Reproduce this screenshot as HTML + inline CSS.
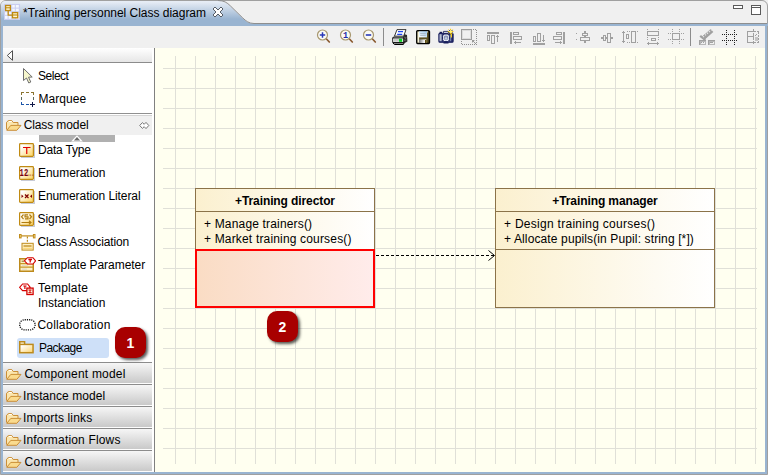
<!DOCTYPE html>
<html>
<head>
<meta charset="utf-8">
<title>Training personnel Class diagram</title>
<style>
html,body{margin:0;padding:0;}
body{width:768px;height:475px;overflow:hidden;background:#f0f0f0;position:relative;font-family:"Liberation Sans",sans-serif;font-size:12px;color:#000;}
.abs{position:absolute;}
#frame{position:absolute;left:0;top:0;width:766px;height:473px;border:1px solid #a0a0a0;border-radius:6px 6px 0 0;background:#f0f0f0;overflow:hidden;}
#tab{position:absolute;left:0;top:0;}
#tabtxt{position:absolute;left:23px;top:6px;white-space:nowrap;font-size:12px;line-height:15px;letter-spacing:-0.02px;}
#blueL{position:absolute;left:1px;top:24px;width:2px;height:449px;background:#99b4d1;}
#blueR{position:absolute;left:765px;top:24px;width:2px;height:449px;background:#99b4d1;}
#blueB{position:absolute;left:1px;top:472px;width:766px;height:2px;background:#99b4d1;}
#blueT{position:absolute;left:1px;top:24px;width:766px;height:2px;background:#99b4d1;}
#tabline{position:absolute;left:250px;top:23px;width:517px;height:1px;background:#a0a0a0;}
#toolbar{position:absolute;left:3px;top:26px;width:762px;height:22px;background:#f0f0f0;}
#side{position:absolute;left:3px;top:48px;width:151px;height:424px;background:#fff;overflow:hidden;}
#sideborder{position:absolute;left:154px;top:48px;width:1px;height:424px;background:#808080;}
#canvas{position:absolute;left:155px;top:48px;width:610px;height:424px;background:#fffff0;}
.lbl{position:absolute;white-space:nowrap;line-height:15px;font-size:12px;}
.hdr{position:absolute;left:0;width:149px;height:19px;background:linear-gradient(#f6f6f6,#c9c9c9);}
.hline{position:absolute;left:0;width:149px;height:1px;background:#8c8c8c;}
.cls{position:absolute;box-sizing:border-box;border:1px solid #8b7349;}
.badge{position:absolute;width:31px;height:31px;border-radius:10px;background:#a80000;box-shadow:2px 2px 3px rgba(0,0,0,.65);color:#fff;font-weight:bold;font-size:14px;line-height:33px;text-align:center;}
</style>
</head>
<body>
<div id="frame"></div>
<!-- TAB -->
<svg id="tab" class="abs" width="768" height="27" viewBox="0 0 768 27">
<defs><linearGradient id="tg" x1="0" y1="0" x2="0" y2="1"><stop offset="0.04" stop-color="#e6ecf5"/><stop offset="0.72" stop-color="#99b4d1"/><stop offset="1" stop-color="#99b4d1"/></linearGradient></defs>
<path d="M1 26 L1 6 Q1 1 6 1 L218 1 C224 1 227 3 230.3 6.2 L242.8 18.4 C246 21.4 249 23.5 254 23.5 L768 23.5 L768 26 Z" fill="url(#tg)"/>
<path d="M218 0.5 C224 0.5 227 2.6 230.3 5.8 L242.8 18 C246 21 249 23.5 254 23.5 L767 23.5" fill="none" stroke="#8e8e8e" stroke-width="1"/>
</svg>
<div id="blueL"></div><div id="blueR"></div><div id="blueB"></div>
<div id="tabtxt">*Training personnel Class diagram</div>
<div id="toolbar"></div>
<svg class="abs" style="left:4px;top:4px" width="16" height="16" viewBox="0 0 16 16"><rect x="0" y="0" width="16" height="16" fill="#c9cdf0"/><g fill="#f4f8ff"><rect x="1" y="1" width="2.6" height="2.6"/><rect x="4.6" y="1" width="2.6" height="2.6"/><rect x="8.2" y="1" width="2.6" height="2.6"/><rect x="11.8" y="1" width="3" height="2.6"/><rect x="1" y="4.6" width="2.6" height="2.6"/><rect x="4.6" y="4.6" width="2.6" height="2.6"/><rect x="8.2" y="4.6" width="2.6" height="2.6"/><rect x="11.8" y="4.6" width="3" height="2.6"/><rect x="1" y="8.2" width="2.6" height="2.6"/><rect x="4.6" y="8.2" width="2.6" height="2.6"/><rect x="8.2" y="8.2" width="2.6" height="2.6"/><rect x="11.8" y="8.2" width="3" height="2.6"/><rect x="1" y="11.8" width="2.6" height="3"/><rect x="4.6" y="11.8" width="2.6" height="3"/><rect x="8.2" y="11.8" width="2.6" height="3"/><rect x="11.8" y="11.8" width="3" height="3"/></g><path d="M4.2 6.5 L4.2 11.2 L8 11.2" fill="none" stroke="#bf8a12" stroke-width="1.3"/><rect x="1.6" y="1.5" width="4.8" height="5" fill="#fff6d0" stroke="#bf8a12" stroke-width="1.3"/><path d="M1.6 3.8 L6.4 3.8" stroke="#bf8a12" stroke-width="1.1"/><rect x="8.5" y="8.6" width="5.2" height="5.2" fill="#fff6d0" stroke="#bf8a12" stroke-width="1.3"/><path d="M8.5 11 L13.7 11" stroke="#bf8a12" stroke-width="1.1"/></svg>
<svg class="abs" style="left:212px;top:6px" width="12" height="12" viewBox="0 0 12 12"><path d="M1 3 L3 1 L6 4 L9 1 L11 3 L8 6 L11 9 L9 11 L6 8 L3 11 L1 9 L4 6 Z" fill="#fff" stroke="#565c66" stroke-width="1" stroke-linejoin="round"/></svg>
<div class="abs" style="left:733px;top:5px;width:8px;height:2px;border:1px solid #5a5a5a;background:#fff;"></div>
<div class="abs" style="left:751px;top:5px;width:8px;height:8px;border:1px solid #5a5a5a;background:#fff;"><div class="abs" style="left:0;top:1px;width:8px;height:1px;background:#5a5a5a;"></div></div>
<svg class="abs" style="left:316px;top:28px" width="16" height="16" viewBox="0 0 16 16"><path d="M10 10.5 L13.3 14" stroke="#8a5a30" stroke-width="1.7" stroke-linecap="round"/><circle cx="6.5" cy="7" r="5" fill="#fbfbf4" stroke="#a89870" stroke-width="1.2"/><path d="M3.8 7 L9.2 7 M6.5 4.3 L6.5 9.7" stroke="#2838b8" stroke-width="1.5"/></svg>
<svg class="abs" style="left:339px;top:28px" width="16" height="16" viewBox="0 0 16 16"><path d="M10 10.5 L13.3 14" stroke="#8a5a30" stroke-width="1.7" stroke-linecap="round"/><circle cx="6.5" cy="7" r="5" fill="#fbfbf4" stroke="#a89870" stroke-width="1.2"/><text x="4" y="9.8" font-family="Liberation Mono,monospace" font-weight="bold" font-size="8.5" fill="#1c28a8">1</text></svg>
<svg class="abs" style="left:362px;top:28px" width="16" height="16" viewBox="0 0 16 16"><path d="M10 10.5 L13.3 14" stroke="#8a5a30" stroke-width="1.7" stroke-linecap="round"/><circle cx="6.5" cy="7" r="5" fill="#fbfbf4" stroke="#a89870" stroke-width="1.2"/><path d="M3.8 7 L9.2 7" stroke="#2838b8" stroke-width="1.6"/></svg>
<div class="abs" style="left:383px;top:28px;width:1px;height:18px;background:#8c8c8c;"></div>
<div class="abs" style="left:690px;top:28px;width:1px;height:18px;background:#8c8c8c;"></div>
<svg class="abs" style="left:392px;top:29px" width="16" height="16" viewBox="0 0 16 16"><path d="M10.5 4.5 L15 6 L15.4 12.6 L11.5 14.8 Z" fill="#2a2a2a"/><path d="M5 0.6 L14 0.6 L11.6 7.4 L2.4 7.4 Z" fill="#fff" stroke="#222" stroke-width="0.9"/><path d="M6 2.6 L11 2.6 M5.2 5.4 L10.2 5.4" stroke="#1c44f0" stroke-width="1.2"/><path d="M0.7 9 L2.6 7.2 L11.6 7.2 L11.6 9 Z" fill="#d4d4d4" stroke="#222" stroke-width="0.8"/><rect x="0.7" y="9" width="11" height="4.4" fill="#f6f6f6" stroke="#111" stroke-width="0.9"/><rect x="2" y="10" width="5" height="2.6" fill="#c8c8c8"/><rect x="7" y="9.8" width="3.2" height="3" fill="#08d020"/><path d="M1 14 L2.4 15.5 L11.4 15.5 L12 14 Z" fill="#fff" stroke="#000" stroke-width="1"/><path d="M12 8 L14 9 M12.5 10 L14.5 8.6 M12 11.5 L14.4 11" stroke="#888" stroke-width="0.6"/></svg>
<svg class="abs" style="left:416px;top:30px" width="15" height="15" viewBox="0 0 15 15"><defs><linearGradient id="lbl" x1="0" y1="1" x2="1" y2="0"><stop offset="0" stop-color="#ffffff"/><stop offset="1" stop-color="#9cc8f0"/></linearGradient><linearGradient id="mtl" x1="0" y1="0" x2="1" y2="0"><stop offset="0" stop-color="#707070"/><stop offset="0.7" stop-color="#f4f4f4"/></linearGradient></defs><rect x="0.8" y="0.8" width="12.6" height="12.6" rx="0.8" fill="#5c5020" stroke="#000" stroke-width="1.5"/><rect x="1.5" y="1.5" width="1.6" height="11.2" fill="#f4f0d8"/><rect x="3" y="1.2" width="8" height="6.2" fill="url(#lbl)"/><path d="M4.2 3.6 L9.8 3.6 M4.2 5.4 L9.8 5.4" stroke="#a8b4c0" stroke-width="0.9"/><rect x="3" y="9.4" width="7.4" height="3.6" fill="url(#mtl)"/><rect x="9" y="10" width="1.6" height="3" fill="#5c4c10"/><rect x="11" y="1.4" width="1" height="1" fill="#fff"/></svg>
<svg class="abs" style="left:438px;top:28px" width="17" height="17" viewBox="0 0 17 17"><defs><linearGradient id="cam" x1="0" y1="0" x2="1" y2="0"><stop offset="0" stop-color="#dfe4f0"/><stop offset="1" stop-color="#5a648c"/></linearGradient></defs><rect x="0.9" y="5.2" width="14.2" height="9" rx="1" fill="#262e70" stroke="#141a58" stroke-width="1.1"/><rect x="1.6" y="6.2" width="2.8" height="7" fill="url(#cam)"/><rect x="11.6" y="7" width="1.6" height="6.2" fill="#7882a8"/><rect x="1.6" y="3.8" width="2.4" height="1.6" fill="#141a58"/><path d="M5.4 5 L5.4 3.4 L10.6 3.4 L10.6 5" fill="#c8cce0" stroke="#2a2e5c" stroke-width="0.9"/><rect x="4.6" y="6" width="6.8" height="7.6" rx="2.2" fill="#f4f6fb" stroke="#141a58" stroke-width="1"/><rect x="5.9" y="7.4" width="4.2" height="4.8" rx="1.4" fill="#8490b4"/><path d="M6.2 11.6 L8 8.2 L9.8 11.6 Z" fill="#c4ccdc"/><path d="M5.5 14.8 L10.5 14.8" stroke="#141a58" stroke-width="1.4"/><path d="M12.6 0.8 L12.6 6.4 M9.8 3.6 L15.4 3.6 M10.6 1.6 L14.6 5.6 M14.6 1.6 L10.6 5.6" stroke="#f4c400" stroke-width="1"/><circle cx="12.6" cy="3.6" r="1.5" fill="#fff27a"/><path d="M13.4 5.6 L13.4 9.4" stroke="#f0cc20" stroke-width="1.2"/><g fill="#2a3480"><rect x="11" y="2" width="0.9" height="0.9"/><rect x="13.6" y="2" width="0.9" height="0.9"/><rect x="10.6" y="4.4" width="0.9" height="0.9"/><rect x="14" y="4.4" width="0.9" height="0.9"/></g></svg>
<svg class="abs" style="left:461px;top:29px" width="17" height="17" viewBox="0 0 17 17" shape-rendering="crispEdges"><rect x="0.5" y="0.5" width="10" height="10" fill="none" stroke="#9c9c9c" stroke-width="1"/><rect x="1.5" y="1.5" width="8" height="8" fill="none" stroke="#dcdcdc" stroke-width="1"/><g fill="#909090"><rect x="15" y="1" width="1" height="1"/><rect x="15" y="3" width="1" height="1"/><rect x="15" y="5" width="1" height="1"/><rect x="15" y="7" width="1" height="1"/><rect x="15" y="9" width="1" height="1"/><rect x="15" y="11" width="1" height="1"/><rect x="15" y="13" width="1" height="1"/><rect x="1" y="15" width="1" height="1"/><rect x="3" y="15" width="1" height="1"/><rect x="5" y="15" width="1" height="1"/><rect x="7" y="15" width="1" height="1"/><rect x="9" y="15" width="1" height="1"/><rect x="11" y="15" width="1" height="1"/><rect x="13" y="15" width="1" height="1"/><rect x="15" y="15" width="1" height="1"/><rect x="12" y="0" width="1" height="1"/><rect x="14" y="0" width="1" height="1"/><rect x="0" y="12" width="1" height="1"/><rect x="0" y="14" width="1" height="1"/></g><g shape-rendering="auto"><path d="M11 11 L14 11 L11 14 Z" fill="#9a9a9a"/><path d="M12 12 L15 15" stroke="#9a9a9a" stroke-width="1"/></g></svg>
<svg class="abs" style="left:486px;top:31px" width="16" height="16" viewBox="0 0 16 16" shape-rendering="crispEdges"><g fill="none" stroke="#a0a0a0" stroke-width="1"><rect x="1" y="1" width="12" height="2" fill="#a0a0a0" stroke="none"/><rect x="1.5" y="4.5" width="2" height="5"/><rect x="5.5" y="4.5" width="3" height="8"/><g fill="#a0a0a0" stroke="none"><rect x="11" y="4" width="1" height="7"/><rect x="10" y="5" width="3" height="1"/></g></g></svg>
<svg class="abs" style="left:509px;top:31px" width="16" height="16" viewBox="0 0 16 16" shape-rendering="crispEdges"><g fill="none" stroke="#a0a0a0" stroke-width="1"><rect x="1" y="1" width="2" height="12" fill="#a0a0a0" stroke="none"/><rect x="4.5" y="1.5" width="5" height="2"/><rect x="4.5" y="5.5" width="8" height="3"/><g fill="#a0a0a0" stroke="none"><rect x="5" y="11" width="7" height="1"/><rect x="6" y="10" width="1" height="3"/></g></g></svg>
<svg class="abs" style="left:532px;top:31px" width="16" height="16" viewBox="0 0 16 16" shape-rendering="crispEdges"><g fill="none" stroke="#a0a0a0" stroke-width="1"><rect x="1" y="12" width="12" height="2" fill="#a0a0a0" stroke="none"/><rect x="1.5" y="5.5" width="2" height="5"/><rect x="5.5" y="2.5" width="3" height="8"/><g fill="#a0a0a0" stroke="none"><rect x="11" y="4" width="1" height="7"/><rect x="10" y="9" width="3" height="1"/></g></g></svg>
<svg class="abs" style="left:552px;top:31px" width="16" height="16" viewBox="0 0 16 16" shape-rendering="crispEdges"><g fill="none" stroke="#a0a0a0" stroke-width="1"><rect x="11" y="1" width="2" height="12" fill="#a0a0a0" stroke="none"/><rect x="4.5" y="1.5" width="5" height="2"/><rect x="1.5" y="5.5" width="8" height="3"/><g fill="#a0a0a0" stroke="none"><rect x="3" y="11" width="7" height="1"/><rect x="8" y="10" width="1" height="3"/></g></g></svg>
<svg class="abs" style="left:576px;top:30px" width="16" height="16" viewBox="0 0 16 16" shape-rendering="crispEdges"><g fill="none" stroke="#a0a0a0" stroke-width="1"><rect x="0" y="3" width="1" height="1" fill="#a0a0a0" stroke="none"/><rect x="0" y="9" width="1" height="1" fill="#a0a0a0" stroke="none"/><rect x="8" y="1" width="2" height="12" fill="#a0a0a0" stroke="none"/><rect x="6.5" y="3.5" width="5" height="2" fill="#f0f0f0"/><rect x="4.5" y="7.5" width="9" height="3" fill="#f0f0f0"/></g></svg>
<svg class="abs" style="left:600px;top:30px" width="16" height="16" viewBox="0 0 16 16" shape-rendering="crispEdges"><g fill="none" stroke="#a0a0a0" stroke-width="1"><rect x="1" y="7" width="12" height="2" fill="#a0a0a0" stroke="none"/><rect x="3.5" y="5.5" width="2" height="5" fill="#f0f0f0"/><rect x="7.5" y="3.5" width="3" height="9" fill="#f0f0f0"/></g></svg>
<svg class="abs" style="left:621px;top:30px" width="17" height="16" viewBox="0 0 17 16" shape-rendering="crispEdges"><g fill="#a0a0a0"><rect x="2" y="1" width="1" height="12"/><rect x="1" y="2" width="3" height="1"/><rect x="1" y="11" width="3" height="1"/><rect x="6" y="1" width="1" height="1"/><rect x="8" y="1" width="1" height="1"/><rect x="16" y="1" width="1" height="1"/><rect x="6" y="12" width="1" height="1"/><rect x="8" y="12" width="1" height="1"/><rect x="16" y="12" width="1" height="1"/></g><g fill="none" stroke="#a0a0a0" stroke-width="1"><rect x="5.5" y="4.5" width="2" height="4"/><rect x="10.5" y="1.5" width="4" height="11"/></g></svg>
<svg class="abs" style="left:646px;top:29px" width="16" height="17" viewBox="0 0 16 17" shape-rendering="crispEdges"><g fill="#a0a0a0"><rect x="1" y="14" width="12" height="1"/><rect x="2" y="13" width="1" height="3"/><rect x="11" y="13" width="1" height="3"/><rect x="1" y="0" width="1" height="1"/><rect x="12" y="0" width="1" height="1"/><rect x="1" y="8" width="1" height="1"/><rect x="1" y="10" width="1" height="1"/><rect x="12" y="8" width="1" height="1"/><rect x="12" y="10" width="1" height="1"/></g><g fill="none" stroke="#a0a0a0" stroke-width="1"><rect x="1.5" y="2.5" width="11" height="4"/><rect x="5.5" y="9.5" width="4" height="2"/></g></svg>
<svg class="abs" style="left:668px;top:29px" width="16" height="16" viewBox="0 0 16 16" shape-rendering="crispEdges"><g fill="none" stroke="#a0a0a0" stroke-width="1"><rect x="4.5" y="4.5" width="7" height="6"/><path d="M4.5 0 L4.5 4 M11.5 0 L11.5 4 M4.5 12 L4.5 16 M11.5 12 L11.5 16 M0 4.5 L4 4.5 M0 10.5 L4 10.5 M13 4.5 L16 4.5 M13 10.5 L16 10.5" stroke-dasharray="1,1"/></g></svg>
<svg class="abs" style="left:699px;top:29px" width="16" height="16" viewBox="0 0 16 16"><path d="M4.5 9 L13 1.6" stroke="#a0a0a0" stroke-width="4" stroke-linecap="butt"/><path d="M1.2 6.8 L6.2 11" stroke="#a0a0a0" stroke-width="2.2"/><path d="M2.2 8.6 L6 5 L8.5 7.6 L5 10.8 Z" fill="#a0a0a0"/><path d="M4 8 L12.6 0.8" stroke="#e4e4e4" stroke-width="1.4" stroke-dasharray="1.3,1.3"/><g shape-rendering="crispEdges" fill="none" stroke="#a0a0a0"><rect x="0.5" y="11.5" width="6" height="4"/><rect x="1" y="12" width="5" height="3" stroke="#b8b8b8"/><rect x="9.5" y="11.5" width="6" height="4"/><rect x="10" y="12" width="5" height="3" stroke="#b8b8b8"/><path d="M2 13.5 L3 13.5 M4 13.5 L5 13.5 M11 13.5 L14 13.5"/></g></svg>
<svg class="abs" style="left:722px;top:30px" width="16" height="16" viewBox="0 0 16 16" shape-rendering="crispEdges"><g stroke="#202020" stroke-width="1" stroke-dasharray="1,1" fill="none"><path d="M0 4.5 L15 4.5 M0 10.5 L15 10.5 M4.5 0 L4.5 15 M12.5 0 L12.5 15"/></g></svg>
<svg class="abs" style="left:747px;top:29px" width="13" height="16" viewBox="0 0 13 16" shape-rendering="crispEdges"><g fill="none" stroke="#a0a0a0" stroke-width="1"><path d="M6.5 2.5 L0.5 2.5 L0.5 13.5 L6.5 13.5 M0.5 7.5 L6.5 7.5"/><path d="M6.5 0 L6.5 16" stroke-dasharray="3,1"/><path d="M7 2.5 L12 2.5 M7 13.5 L12 13.5 M11.5 3 L11.5 13" stroke-dasharray="2,1"/><rect x="8" y="8" width="3" height="4" fill="#c4c4c4" stroke="none"/><path d="M8 6.5 L10 5.5" /></g></svg>
<div id="side">
<div class="abs" style="left:0;top:0;width:149px;height:14px;background:linear-gradient(#ffffff,#e6e6e6);"></div>
<div class="abs" style="left:0;top:14px;width:149px;height:1px;background:#8c8c8c;"></div>
<svg class="abs" style="left:3px;top:1px" width="10" height="13" viewBox="0 0 10 13"><path d="M6.5 1.7 L6.5 11.3 L1.3 6.5 Z" fill="#fff" stroke="#505050" stroke-width="1"/></svg>
<svg class="abs" style="left:19px;top:19px" width="12" height="18" viewBox="0 0 12 18"><path d="M1.5 1.5 L1.5 13.5 L4.5 11 L6.8 16 L8.8 15 L6.5 10.2 L10.2 10 Z" fill="#f6f6cc" stroke="#6e6e6e" stroke-width="1" stroke-linejoin="round"/></svg>
<svg class="abs" style="left:18px;top:44px" width="15" height="15" viewBox="0 0 15 15" shape-rendering="crispEdges"><g fill="#8a7430"><rect x="0" y="0" width="3" height="1"/><rect x="5" y="0" width="3" height="1"/><rect x="10" y="0" width="3" height="1"/><rect x="0" y="1" width="1" height="2"/><rect x="12" y="1" width="1" height="2"/></g><g fill="#5a6a60"><rect x="0" y="5" width="1" height="3"/><rect x="12" y="5" width="1" height="3"/></g><g fill="#1c55a8"><rect x="0" y="10" width="1" height="3"/><rect x="1" y="12" width="2" height="1"/><rect x="5" y="12" width="3" height="1"/></g><g fill="#101848"><rect x="9" y="12" width="5" height="1"/><rect x="11" y="10" width="1" height="5"/></g></svg>
<div class="abs" style="left:0;top:65px;width:149px;height:1px;background:#909090;"></div>
<div class="abs" style="left:0;top:67px;width:149px;height:1px;background:#d4d4d4;"></div>
<div class="abs" style="left:0;top:68px;width:149px;height:19px;background:#f0f0f0;"></div>
<svg class="abs" style="left:3px;top:72px" width="17" height="12" viewBox="0 0 17 12"><path d="M0.5 9.5 L0.5 2.3 L2.3 0.6 L5.8 0.6 L7.2 2.5 L12 2.5 L12 5.3" fill="#fbe6ae" stroke="#c88a30" stroke-width="0.95" stroke-linejoin="round"/><path d="M0.8 10.3 L4.8 5.4 L15 5.4 L10.8 10.3 Z" fill="#fadb8e" stroke="#c88a30" stroke-width="0.95" stroke-linejoin="round"/><path d="M3 1.5 L5.8 1.5" stroke="#fff" stroke-width="1"/></svg>
<svg class="abs" style="left:135px;top:73px" width="13" height="9" viewBox="0 0 13 9"><path d="M1.7 4.5 L4.4 1.6 L6.2 3.3 L8 1.4 L10.8 4.5 L8 7.6 L6.2 5.7 L4.4 7.4 Z" fill="#fff" stroke="#6a6a6a" stroke-width="0.9" stroke-linejoin="round"/></svg>
<div class="abs" style="left:36px;top:87px;width:76px;height:7px;background:#b0b0b0;"></div>
<svg class="abs" style="left:68px;top:87px" width="12" height="7" viewBox="0 0 12 7"><path d="M1.5 6 L6 1.2 L10.5 6 Z" fill="#6a6a6a" stroke="#fff" stroke-width="1.2"/></svg>
<svg class="abs" style="left:16px;top:95px" width="16" height="15" viewBox="0 0 16 15"><defs><linearGradient id="gb95" x1="0" y1="0" x2="1" y2="1"><stop offset="0.2" stop-color="#ffffff"/><stop offset="1" stop-color="#fdd25c"/></linearGradient></defs><rect x="15" y="2" width="1" height="14" fill="#9aa0b4" opacity="0.55"/><rect x="2" y="14" width="13" height="1" fill="#9aa0b4" opacity="0.55"/><rect x="0.6" y="0.6" width="13.8" height="12.8" rx="0.8" fill="url(#gb95)" stroke="#c08a12" stroke-width="1.2"/><path d="M4 4.5 L11.5 4.5 M7.75 4.5 L7.75 11" stroke="#e00000" stroke-width="1.2" fill="none"/></svg>
<svg class="abs" style="left:16px;top:118px" width="16" height="15" viewBox="0 0 16 15"><defs><linearGradient id="gb118" x1="0" y1="0" x2="1" y2="1"><stop offset="0.2" stop-color="#ffffff"/><stop offset="1" stop-color="#fdd25c"/></linearGradient></defs><rect x="15" y="2" width="1" height="14" fill="#9aa0b4" opacity="0.55"/><rect x="2" y="14" width="13" height="1" fill="#9aa0b4" opacity="0.55"/><rect x="0.6" y="0.6" width="13.8" height="12.8" rx="0.8" fill="url(#gb118)" stroke="#c08a12" stroke-width="1.2"/><text x="0.6" y="10.4" font-family="Liberation Mono,monospace" font-weight="bold" font-size="10" fill="#780010" textLength="8.6" lengthAdjust="spacingAndGlyphs">12</text><text x="9" y="10.4" font-family="Liberation Mono,monospace" font-weight="bold" font-size="10" fill="#780010" textLength="5.6" lengthAdjust="spacingAndGlyphs">...</text></svg>
<svg class="abs" style="left:16px;top:141px" width="16" height="15" viewBox="0 0 16 15"><defs><linearGradient id="gb141" x1="0" y1="0" x2="1" y2="1"><stop offset="0.2" stop-color="#ffffff"/><stop offset="1" stop-color="#fdd25c"/></linearGradient></defs><rect x="15" y="2" width="1" height="14" fill="#9aa0b4" opacity="0.55"/><rect x="2" y="14" width="13" height="1" fill="#9aa0b4" opacity="0.55"/><rect x="0.6" y="0.6" width="13.8" height="12.8" rx="0.8" fill="url(#gb141)" stroke="#c08a12" stroke-width="1.2"/><g fill="#800000"><path d="M2.5 5.5 L4.5 7.3 L2.5 9 Z"/><path d="M13 5.5 L11 7.3 L13 9 Z"/></g><path d="M6 5.5 L9.5 9 M9.5 5.5 L6 9" stroke="#800000" stroke-width="1.2"/></svg>
<svg class="abs" style="left:16px;top:164px" width="16" height="15" viewBox="0 0 16 15"><defs><linearGradient id="gb164" x1="0" y1="0" x2="1" y2="1"><stop offset="0.2" stop-color="#ffffff"/><stop offset="1" stop-color="#fdd25c"/></linearGradient></defs><rect x="15" y="2" width="1" height="14" fill="#9aa0b4" opacity="0.55"/><rect x="2" y="14" width="13" height="1" fill="#9aa0b4" opacity="0.55"/><rect x="0.6" y="0.6" width="13.8" height="12.8" rx="0.8" fill="url(#gb164)" stroke="#c08a12" stroke-width="1.2"/><g stroke="#b07c10" stroke-width="1.15" fill="none"><path d="M4.5 2.5 L2.5 4.8 L4.5 7"/><path d="M10.5 2.5 L12.5 4.8 L10.5 7"/><path d="M9 2.8 L6 2.8 L6 4.8 L9 4.8 L9 6.8 L6 6.8"/><path d="M2.5 10.5 L12 10.5 M10 8.8 L12 10.5 L10 12.2"/></g></svg>
<svg class="abs" style="left:16px;top:186px" width="17" height="17" viewBox="0 0 17 17"><g fill="#fbe08c" stroke="#c08c1c" stroke-width="1"><rect x="0.5" y="0.5" width="1.6" height="3.4"/><rect x="14.4" y="0.5" width="1.6" height="3.4"/><rect x="3" y="9.3" width="11.2" height="6.8" fill="#fdf0c4"/></g><path d="M2 1.9 L14.5 1.9" stroke="#c08c1c" stroke-width="1.2"/><path d="M8.4 2.5 L8.4 9.5" stroke="#c08c1c" stroke-width="1.2" stroke-dasharray="2,1.2"/><path d="M4.5 12 L12.6 12" stroke="#c08c1c" stroke-width="1.3"/><path d="M4.2 14.4 L13 14.4" stroke="#fbd878" stroke-width="1.4"/></svg>
<svg class="abs" style="left:16px;top:209px" width="17" height="16" viewBox="0 0 17 16"><rect x="0.75" y="1.75" width="13.5" height="12.5" fill="#fdf2c8" stroke="#bd8a1c" stroke-width="1.5"/><path d="M1 6.6 L14 6.6 M1 10.2 L14 10.2" stroke="#c8962a" stroke-width="1.2"/><path d="M2.6 4.2 L5 4.2" stroke="#8a6a18" stroke-width="1"/><path d="M3 8.5 L9 8.5 M3 12.2 L8 12.2" stroke="#e4dccc" stroke-width="1.2"/><path d="M5.4 3.8 L8.4 0.7 L14 0.7 L16.6 3.8 L14 7 L8.4 7 Z" fill="#fff" stroke="#d40000" stroke-width="1.1"/><path d="M9.4 2.5 L13 2.5 M11.2 2.5 L11.2 5.6" stroke="#d40000" stroke-width="1.3"/></svg>
<svg class="abs" style="left:16px;top:235px" width="16" height="13" viewBox="0 0 16 13"><path d="M0.6 4.3 L3.6 1 L8.6 1 L11.2 4.3 L8.6 7.6 L3.6 7.6 Z" fill="#fff" stroke="#d40000" stroke-width="1.1"/><path d="M4.3 3 L7.6 3 M5.9 3 L5.9 6" stroke="#d40000" stroke-width="1.2"/><rect x="7.9" y="5.1" width="6.2" height="6.4" fill="#fffbe8" stroke="#d40000" stroke-width="1.3"/><path d="M9.4 7 L12.6 7 M9.4 9.7 L12.6 9.7 M11 7 L11 9.7" stroke="#d40000" stroke-width="1"/></svg>
<svg class="abs" style="left:16px;top:271px" width="17" height="12" viewBox="0 0 17 12"><rect x="0.7" y="0.7" width="15.4" height="10.2" rx="5" ry="5" fill="#fff" stroke="#111" stroke-width="1.35" stroke-dasharray="1.15,1.05"/></svg>
<div class="abs" style="left:14px;top:290px;width:92px;height:20px;background:#cee0f8;border-radius:3px;"></div>
<svg class="abs" style="left:16px;top:293px" width="16" height="13" viewBox="0 0 16 13"><defs><linearGradient id="pk" x1="0" y1="0" x2="1" y2="1"><stop offset="0.15" stop-color="#ffffff"/><stop offset="1" stop-color="#fdd46c"/></linearGradient></defs><path d="M0.75 3.4 L0.75 0.75 L5.6 0.75 L5.6 3.4" fill="#fffdf0" stroke="#bd8a1c" stroke-width="1.5"/><rect x="0.75" y="3.4" width="13.3" height="8.3" fill="url(#pk)" stroke="#bd8a1c" stroke-width="1.5"/></svg>
<div class="hline" style="top:314px"></div><div class="hdr" style="top:315px;height:20px"></div><div class="abs" style="left:0;top:335px;width:149px;height:1px;background:#fdfdfd"></div>
<svg class="abs" style="left:3px;top:321px" width="17" height="12" viewBox="0 0 17 12"><path d="M0.5 9.5 L0.5 2.3 L2.3 0.6 L5.8 0.6 L7.2 2.5 L12 2.5 L12 5.3" fill="#fbe6ae" stroke="#c88a30" stroke-width="0.95" stroke-linejoin="round"/><path d="M0.8 10.3 L4.8 5.4 L15 5.4 L10.8 10.3 Z" fill="#fadb8e" stroke="#c88a30" stroke-width="0.95" stroke-linejoin="round"/><path d="M3 1.5 L5.8 1.5" stroke="#fff" stroke-width="1"/></svg>
<div class="hline" style="top:336px"></div><div class="hdr" style="top:337px;height:20px"></div><div class="abs" style="left:0;top:357px;width:149px;height:1px;background:#fdfdfd"></div>
<svg class="abs" style="left:3px;top:343px" width="17" height="12" viewBox="0 0 17 12"><path d="M0.5 9.5 L0.5 2.3 L2.3 0.6 L5.8 0.6 L7.2 2.5 L12 2.5 L12 5.3" fill="#fbe6ae" stroke="#c88a30" stroke-width="0.95" stroke-linejoin="round"/><path d="M0.8 10.3 L4.8 5.4 L15 5.4 L10.8 10.3 Z" fill="#fadb8e" stroke="#c88a30" stroke-width="0.95" stroke-linejoin="round"/><path d="M3 1.5 L5.8 1.5" stroke="#fff" stroke-width="1"/></svg>
<div class="hline" style="top:358px"></div><div class="hdr" style="top:359px;height:20px"></div><div class="abs" style="left:0;top:379px;width:149px;height:1px;background:#fdfdfd"></div>
<svg class="abs" style="left:3px;top:365px" width="17" height="12" viewBox="0 0 17 12"><path d="M0.5 9.5 L0.5 2.3 L2.3 0.6 L5.8 0.6 L7.2 2.5 L12 2.5 L12 5.3" fill="#fbe6ae" stroke="#c88a30" stroke-width="0.95" stroke-linejoin="round"/><path d="M0.8 10.3 L4.8 5.4 L15 5.4 L10.8 10.3 Z" fill="#fadb8e" stroke="#c88a30" stroke-width="0.95" stroke-linejoin="round"/><path d="M3 1.5 L5.8 1.5" stroke="#fff" stroke-width="1"/></svg>
<div class="hline" style="top:380px"></div><div class="hdr" style="top:381px;height:20px"></div><div class="abs" style="left:0;top:401px;width:149px;height:1px;background:#fdfdfd"></div>
<svg class="abs" style="left:3px;top:387px" width="17" height="12" viewBox="0 0 17 12"><path d="M0.5 9.5 L0.5 2.3 L2.3 0.6 L5.8 0.6 L7.2 2.5 L12 2.5 L12 5.3" fill="#fbe6ae" stroke="#c88a30" stroke-width="0.95" stroke-linejoin="round"/><path d="M0.8 10.3 L4.8 5.4 L15 5.4 L10.8 10.3 Z" fill="#fadb8e" stroke="#c88a30" stroke-width="0.95" stroke-linejoin="round"/><path d="M3 1.5 L5.8 1.5" stroke="#fff" stroke-width="1"/></svg>
<div class="hline" style="top:402px"></div><div class="hdr" style="top:403px;height:20px"></div><div class="abs" style="left:0;top:423px;width:149px;height:1px;background:#fdfdfd"></div>
<svg class="abs" style="left:3px;top:409px" width="17" height="12" viewBox="0 0 17 12"><path d="M0.5 9.5 L0.5 2.3 L2.3 0.6 L5.8 0.6 L7.2 2.5 L12 2.5 L12 5.3" fill="#fbe6ae" stroke="#c88a30" stroke-width="0.95" stroke-linejoin="round"/><path d="M0.8 10.3 L4.8 5.4 L15 5.4 L10.8 10.3 Z" fill="#fadb8e" stroke="#c88a30" stroke-width="0.95" stroke-linejoin="round"/><path d="M3 1.5 L5.8 1.5" stroke="#fff" stroke-width="1"/></svg>
<div class="lbl" style="left:35px;top:21px;letter-spacing:-0.480px">Select</div>
<div class="lbl" style="left:35.5px;top:44px;letter-spacing:0.050px">Marquee</div>
<div class="lbl" style="left:20.7px;top:70px;letter-spacing:-0.110px">Class model</div>
<div class="lbl" style="left:35px;top:95px;letter-spacing:-0.200px">Data Type</div>
<div class="lbl" style="left:35px;top:118px;letter-spacing:-0.050px">Enumeration</div>
<div class="lbl" style="left:35px;top:141px;letter-spacing:-0.080px">Enumeration Literal</div>
<div class="lbl" style="left:34.5px;top:164px;letter-spacing:-0.070px">Signal</div>
<div class="lbl" style="left:34.5px;top:187px;letter-spacing:-0.150px">Class Association</div>
<div class="lbl" style="left:35px;top:210px;letter-spacing:-0.053px">Template Parameter</div>
<div class="lbl" style="left:35px;top:233px;letter-spacing:0.172px">Template</div>
<div class="lbl" style="left:35px;top:248px;letter-spacing:0.000px">Instanciation</div>
<div class="lbl" style="left:34.5px;top:270px;letter-spacing:0.175px">Collaboration</div>
<div class="lbl" style="left:36px;top:293px;letter-spacing:-0.550px">Package</div>
<div class="lbl" style="left:21.5px;top:319px;letter-spacing:0.204px">Component model</div>
<div class="lbl" style="left:20px;top:341px;letter-spacing:0.058px">Instance model</div>
<div class="lbl" style="left:20px;top:363px;letter-spacing:0.150px">Imports links</div>
<div class="lbl" style="left:20px;top:385px;letter-spacing:0.172px">Information Flows</div>
<div class="lbl" style="left:21.5px;top:407px;letter-spacing:0.400px">Common</div>
</div>
<div class="badge" style="left:115px;top:327px;">1</div>
<div id="sideborder"></div>
<div id="canvas">
<div class="abs" style="left:8px;top:8px;width:594px;height:408px;background-image:linear-gradient(to right,#e0e0d8 1px,transparent 1px),linear-gradient(to bottom,#e0e0d8 1px,transparent 1px);background-size:20px 20px;background-position:12px 12px;"></div>
</div>
<!-- class 1 -->
<div class="cls" style="left:195px;top:188px;width:180px;height:62px;background:linear-gradient(to right,#fbf0cf,#ffffff);">
<div class="abs" style="left:0;top:22px;width:178px;height:1px;background:#8b7349;"></div>
<div class="abs" style="left:0;top:3px;width:178px;text-align:center;font-weight:bold;line-height:18px;font-size:12px;letter-spacing:-0.1px;">+Training director</div>
<div class="abs" style="left:8px;top:28px;line-height:15px;white-space:nowrap;letter-spacing:0.17px;">+ Manage trainers()<br>+ Market training courses()</div>
</div>
<div class="abs" style="left:195px;top:249px;width:176px;height:55px;border:2px solid #ff0000;background:linear-gradient(to right,#fadcc4,#ffeceb);"></div>
<!-- class 2 -->
<div class="cls" style="left:495px;top:188px;width:220px;height:120px;background:linear-gradient(to right,#fbf0cf,#ffffff);">
<div class="abs" style="left:0;top:22px;width:218px;height:1px;background:#8b7349;"></div>
<div class="abs" style="left:0;top:60px;width:218px;height:1px;background:#8b7349;"></div>
<div class="abs" style="left:0;top:3px;width:218px;text-align:center;font-weight:bold;line-height:18px;font-size:12px;letter-spacing:-0.1px;">+Training manager</div>
<div class="abs" style="left:8px;top:28px;line-height:15px;white-space:nowrap;letter-spacing:0.125px;"><span style="letter-spacing:0.28px">+ Design training courses()</span><br>+ Allocate pupils(in Pupil: string [*])</div>
</div>
<!-- arrow -->
<svg class="abs" style="left:375px;top:248px;" width="121" height="15" viewBox="0 0 121 15">
<line x1="1" y1="7.5" x2="119" y2="7.5" stroke="#000" stroke-width="1" stroke-dasharray="3,2" shape-rendering="crispEdges"/>
<path d="M113.5 2.5 L119.5 7.5 L113.5 12.5" fill="none" stroke="#000" stroke-width="1"/>
</svg>
<div class="badge" style="left:267px;top:311px;">2</div>
</body>
</html>
